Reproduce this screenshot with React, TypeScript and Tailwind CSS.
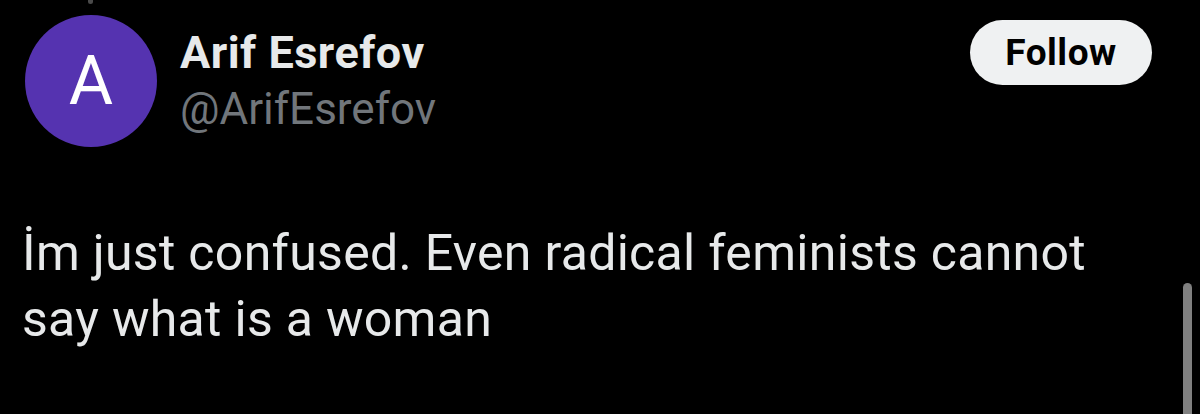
export default function App() {
  return (
    <div
      className="relative h-[414px] w-[1200px] overflow-hidden bg-black"
      style={{ fontFamily: "Roboto, 'Liberation Sans', sans-serif" }}
    >
      {/* tail of the thread line from the tweet above */}
      <div className="absolute left-[88px] top-0 h-[4px] w-[5px] rounded-b-full bg-[#4a4a4a]" />

      <div className="flex items-start pl-[25px] pr-[48px] pt-[15px]">
        <div className="flex h-[132px] w-[132px] shrink-0 items-center justify-center rounded-full bg-[#5533b0]">
          <span className="text-[68px] leading-none text-white">A</span>
        </div>
        <div className="ml-[23px] flex flex-col pt-[13px]">
          <span className="text-[45px] font-bold leading-[50px] tracking-[0.5px] text-[#e7e9ea]">
            Arif Esrefov
          </span>
          <span className="mt-[6px] text-[44px] leading-[50px] text-[#71767b]">
            @ArifEsrefov
          </span>
        </div>
        <button className="ml-auto mt-[5px] flex h-[65px] w-[182px] items-center justify-center rounded-full bg-[#eff1f2] text-[37px] font-bold tracking-[0.5px] text-black">
          Follow
        </button>
      </div>

      <p className="mt-[73px] pl-[22px] text-[50px] leading-[66px] tracking-[0.3px] text-[#e7e9ea]">
        İm just confused. Even radical feminists cannot
        <br />
        say what is a woman
      </p>

      <div className="absolute left-[1183px] top-[283px] h-[140px] w-[9px] rounded-t-full bg-[#808080]" />
    </div>
  );
}
